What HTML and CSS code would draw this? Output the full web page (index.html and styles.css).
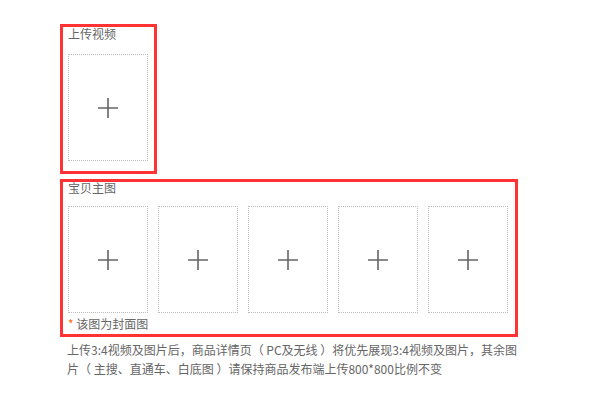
FILE: index.html
```html
<!DOCTYPE html>
<html lang="zh-CN">
<head>
<meta charset="utf-8">
<link rel="stylesheet" href="styles.css">
</head>
<body>
<div class="page">
  <div class="box box-video">
    <div class="label">上传视频</div>
    <div class="slots">
      <div class="slot"><svg class="plus" width="20" height="20" viewBox="0 0 20 20"><path d="M0 10H20M10 0V20" stroke="#666" stroke-width="1.6"/></svg></div>
    </div>
  </div>
  <div class="box box-main">
    <div class="label">宝贝主图</div>
    <div class="slots">
      <div class="slot"><svg class="plus" width="20" height="20" viewBox="0 0 20 20"><path d="M0 10H20M10 0V20" stroke="#666" stroke-width="1.6"/></svg></div>
      <div class="slot"><svg class="plus" width="20" height="20" viewBox="0 0 20 20"><path d="M0 10H20M10 0V20" stroke="#666" stroke-width="1.6"/></svg></div>
      <div class="slot"><svg class="plus" width="20" height="20" viewBox="0 0 20 20"><path d="M0 10H20M10 0V20" stroke="#666" stroke-width="1.6"/></svg></div>
      <div class="slot"><svg class="plus" width="20" height="20" viewBox="0 0 20 20"><path d="M0 10H20M10 0V20" stroke="#666" stroke-width="1.6"/></svg></div>
      <div class="slot"><svg class="plus" width="20" height="20" viewBox="0 0 20 20"><path d="M0 10H20M10 0V20" stroke="#666" stroke-width="1.6"/></svg></div>
    </div>
    <div class="note"><span class="star">*</span> 该图为封面图</div>
  </div>
  <p class="tip">上传3:4视频及图片后，商品详情页（ PC及无线 ）将优先展现3:4视频及图片，其余图片（ 主搜、直通车、白底图 ）请保持商品发布端上传800*800比例不变</p>
</div>
</body>
</html>
```

FILE: styles.css
```css
html, body {
  margin: 0;
  padding: 0;
  background: #fff;
}
body {
  font-family: "Noto Sans CJK SC", "Liberation Sans", sans-serif;
  font-size: 12px;
  color: #666;
}
.page {
  padding: 24px 0 0 60px;
}
.box {
  border: 3px solid #f33;
  box-sizing: border-box;
  padding-left: 5px;
}
.box-video {
  width: 97px;
  height: 150px;
  padding-top: 1px;
}
.box-video .slots {
  margin-top: 14px;
}
.box-main {
  width: 458px;
  height: 158px;
  margin-top: 5px;
}
.box-main .slots {
  margin-top: 12px;
}
.label {
  line-height: 12px;
  height: 12px;
}
.slots {
  display: flex;
  gap: 10px;
}
.slot {
  width: 80px;
  height: 107px;
  box-sizing: border-box;
  border: 1px dotted #bbb;
  display: flex;
  align-items: center;
  justify-content: center;
}
.plus {
  display: block;
}
.note {
  margin-top: 5px;
  line-height: 12px;
  height: 12px;
}
.star {
  color: #f60;
}
.tip {
  margin: 3px 0 0 7px;
  width: 452px;
  line-height: 19px;
}
```
